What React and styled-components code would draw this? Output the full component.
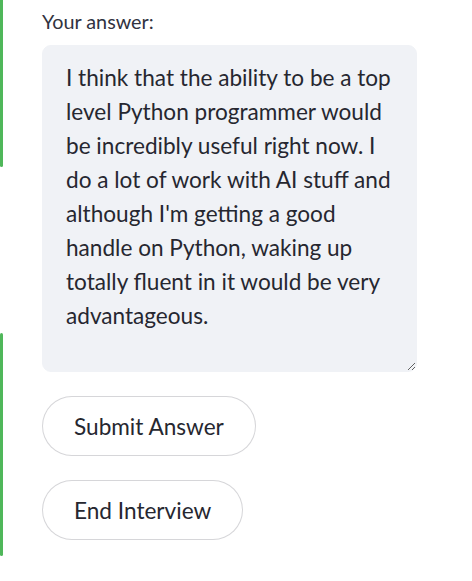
import styled, { createGlobalStyle } from "styled-components";

const Global = createGlobalStyle`
    html, body {
        margin: 0;
        padding: 0;
        background: #ffffff;
    }
    body {
        font-family: Lato, "Noto Sans", sans-serif;
        color: #31333f;
    }
`

const Page = styled.div`
    display: flex;
    align-items: flex-start;
    min-height: 581px;
`

const Rail = styled.div`
    display: flex;
    flex-direction: column;
    width: 3px;
    flex-shrink: 0;
`

const Bar = styled.div`
    width: 3px;
    height: ${p => p.h}px;
    margin-top: ${p => p.top || 0}px;
    background: #4fb75a;
    border-radius: ${p => p.round};
`

const Content = styled.div`
    display: flex;
    flex-direction: column;
    align-items: flex-start;
    margin-left: 39px;
    padding-top: 8px;
    width: 375px;
`

const Label = styled.label`
    font-size: 19.8px;
    line-height: 27px;
    margin-bottom: 10px;
    color: #31333f;
`

const Answer = styled.textarea`
    box-sizing: border-box;
    width: 375px;
    height: 327px;
    margin: 0 0 24px 0;
    padding: 15px 20px 0 23px;
    border: 1px solid #f0f2f6;
    border-radius: 9px;
    background: #f0f2f6;
    color: #262730;
    font-family: Lato, "Noto Sans", sans-serif;
    font-size: 22.6px;
    line-height: 34px;
    outline: none;
    resize: vertical;
    overflow: hidden;
`

const Buttons = styled.div`
    display: flex;
    flex-direction: column;
    align-items: flex-start;
    gap: 24px;
`

const Button = styled.button`
    box-sizing: border-box;
    height: 60px;
    padding: 0 31px;
    border: 1px solid rgba(49, 51, 63, 0.2);
    border-radius: 30px;
    background: #ffffff;
    color: #262730;
    font-family: Lato, "Noto Sans", sans-serif;
    font-size: 22.6px;
    cursor: pointer;
`

const answer = "I think that the ability to be a top level Python programmer would be incredibly useful right now. I do a lot of work with AI stuff and although I'm getting a good handle on Python, waking up totally fluent in it would be very advantageous."

const App = () => {
    return (
        <Page>
            <Global />
            <Rail>
                <Bar h={167} round="0 0 3px 3px" />
                <Bar h={223} top={166} round="3px" />
            </Rail>
            <Content>
                <Label htmlFor="answer">Your answer:</Label>
                <Answer id="answer" defaultValue={answer} />
                <Buttons>
                    <Button>Submit Answer</Button>
                    <Button>End Interview</Button>
                </Buttons>
            </Content>
        </Page>
    )
}

export default App;
